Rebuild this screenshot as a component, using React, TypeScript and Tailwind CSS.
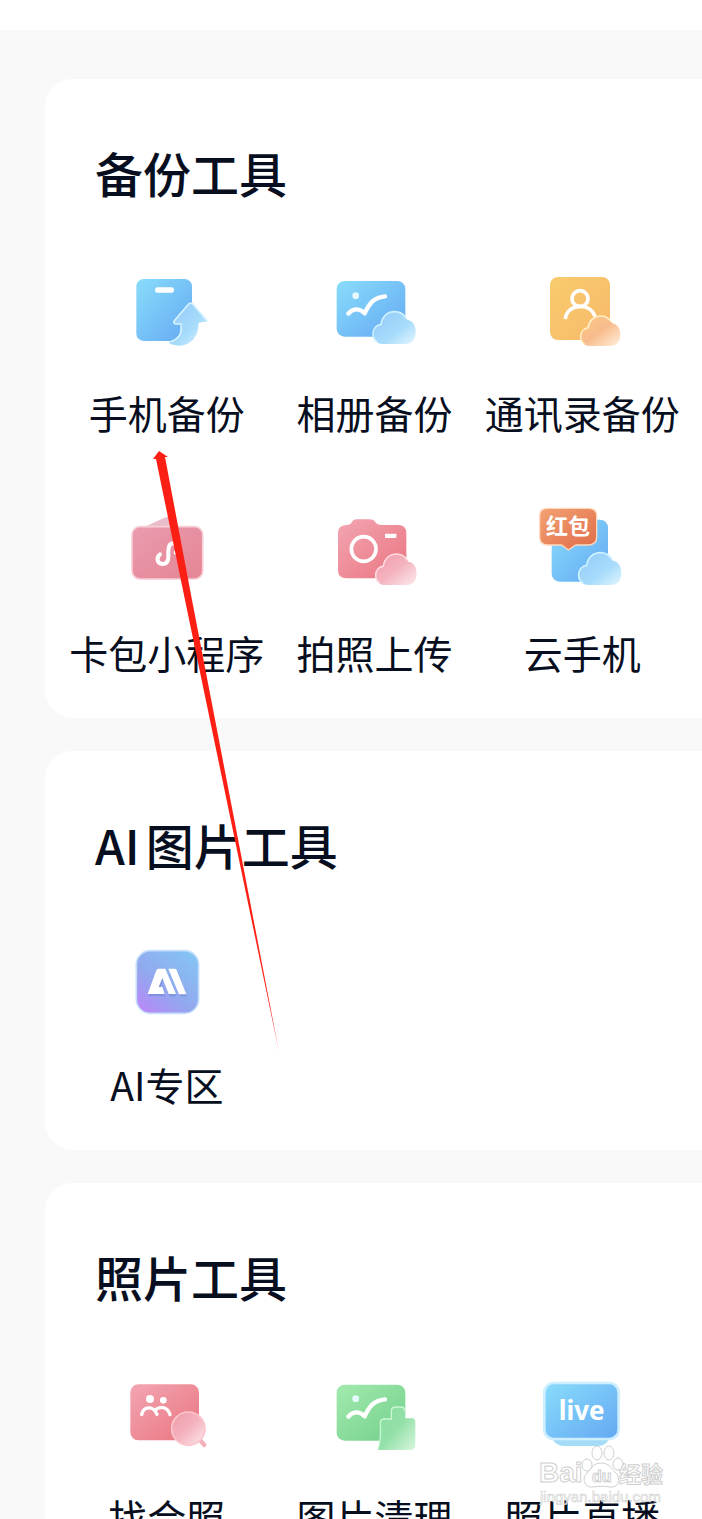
import React from 'react';

type Tool = {
  label: string;
  viewBox: string;
  icon: React.ReactNode;
};

type SectionProps = {
  title: React.ReactNode;
  tools: Tool[];
};

const Gradients: React.FC = () => (
  <svg className="absolute w-0 h-0" aria-hidden="true">
    <defs>
      <linearGradient id="blue" x1="0" y1="0" x2="1" y2="1">
        <stop offset="0" stopColor="#89dcfb" />
        <stop offset="1" stopColor="#64a8f3" />
      </linearGradient>
      <linearGradient id="blueSoft" x1="0" y1="0" x2="1" y2="1">
        <stop offset="0" stopColor="#92c8f9" />
        <stop offset="0.6" stopColor="#a8dcfb" />
        <stop offset="1" stopColor="#e2f6ff" />
      </linearGradient>
      <linearGradient id="orange" x1="0" y1="0" x2="1" y2="1">
        <stop offset="0" stopColor="#f8cb6e" />
        <stop offset="1" stopColor="#f8b96a" />
      </linearGradient>
      <linearGradient id="orangeSoft" x1="0" y1="0" x2="1" y2="1">
        <stop offset="0" stopColor="#fbcb85" />
        <stop offset="0.5" stopColor="#f8bb8c" />
        <stop offset="1" stopColor="#fff0dc" />
      </linearGradient>
      <linearGradient id="pink" x1="0" y1="0" x2="1" y2="1">
        <stop offset="0" stopColor="#f3a5b3" />
        <stop offset="1" stopColor="#e9757f" />
      </linearGradient>
      <linearGradient id="rose" x1="0" y1="0" x2="1" y2="1">
        <stop offset="0" stopColor="#e99caf" />
        <stop offset="1" stopColor="#e58493" />
      </linearGradient>
      <linearGradient id="pinkSoft" x1="0" y1="0" x2="1" y2="1">
        <stop offset="0" stopColor="#f09aa8" />
        <stop offset="0.5" stopColor="#f4b3be" />
        <stop offset="1" stopColor="#fdeaee" />
      </linearGradient>
      <linearGradient id="red" x1="0" y1="0" x2="1" y2="1">
        <stop offset="0" stopColor="#f3a273" />
        <stop offset="1" stopColor="#e06b48" />
      </linearGradient>
      <linearGradient id="green" x1="0" y1="0" x2="1" y2="1">
        <stop offset="0" stopColor="#a2eaae" />
        <stop offset="1" stopColor="#72cf8b" />
      </linearGradient>
      <linearGradient id="greenSoft" x1="0" y1="0" x2="1" y2="1">
        <stop offset="0" stopColor="#8cdea0" />
        <stop offset="0.5" stopColor="#93e0a8" />
        <stop offset="1" stopColor="#d8f7df" />
      </linearGradient>
      <linearGradient id="violet" x1="0" y1="1" x2="0.8" y2="0">
        <stop offset="0" stopColor="#bd83fa" />
        <stop offset="0.45" stopColor="#93a7ee" />
        <stop offset="1" stopColor="#85c3f3" />
      </linearGradient>
    </defs>
  </svg>
);

const Cloud: React.FC<{ x: number; y: number; fill: string; stroke: string }> = ({ x, y, fill, stroke }) => (
  <g transform={`translate(${x} ${y})`}>
    <path
      d="M32 100 C12 100 2 86 2 70 C2 53 13 43 26 41 C29 18 46 3 67 3 C86 3 98 13 104 27 C122 30 130 44 130 64 C130 88 118 100 98 100 Z"
      fill={fill}
    />
    <path
      d="M14 93 C6 88 2 80 2 70 C2 53 13 43 26 41 C29 18 46 3 67 3 C82 3 93 10 100 21"
      fill="none"
      stroke={stroke}
      strokeWidth="5"
      strokeLinecap="round"
    />
  </g>
);

const PhotoMark: React.FC = () => (
  <>
    <circle cx="122" cy="107" r="10" fill="#e6f9ff" />
    <path d="M100 161 C112 146 132 142 149 160 C163 130 177 112 210 109" fill="none" stroke="#fff" strokeWidth="13" strokeLinecap="round" strokeLinejoin="round" />
  </>
);

const backupTools: Tool[] = [
  {
    label: '手机备份',
    viewBox: '-12 0 360 300',
    icon: (
      <>
        <rect x="76" y="57" width="167" height="186" rx="22" fill="url(#blue)" />
        <rect x="132" y="82" width="57" height="16" rx="8" fill="#fff" />
        <path d="M172 247 C206 240 213 222 210 192 L194 192 Q184 189 191 181 L231 134 Q239 125 247 134 L290 184 L263 188 C263 230 240 258 200 257 Q180 255 172 247 Z" fill="url(#blueSoft)" />
        <path d="M176 246 C206 236 213 222 210 192 L194 192 Q184 189 191 181 L231 134 Q239 125 247 134 L288 182" fill="none" stroke="#d4f2ff" strokeWidth="5" strokeLinejoin="round" />
      </>
    ),
  },
  {
    label: '相册备份',
    viewBox: '-3 0 360 300',
    icon: (
      <>
        <rect x="65" y="63" width="206" height="167" rx="24" fill="url(#blue)" />
        <PhotoMark />
        <Cloud x={172} y={152} fill="url(#blueSoft)" stroke="#cdf2ff" />
      </>
    ),
  },
  {
    label: '通讯录备份',
    viewBox: '-21 0 360 300',
    icon: (
      <>
        <rect x="63" y="51" width="180" height="189" rx="24" fill="url(#orange)" />
        <circle cx="153" cy="116" r="24" fill="none" stroke="#fff" strokeWidth="11" />
        <path d="M109 177 C114 130 184 125 198 170" fill="none" stroke="#fff" strokeWidth="11" />
        <g transform="translate(153 165) scale(0.93 0.93)">
          <Cloud x={0} y={0} fill="url(#orangeSoft)" stroke="#fff0c5" />
        </g>
      </>
    ),
  },
  {
    label: '卡包小程序',
    viewBox: '-12 180 360 300',
    icon: (
      <>
        <path d="M105 259 L160 233 Q172 228 180 236 L204 261 Z" fill="#e8bccb" />
        <rect x="63" y="260" width="212" height="157" rx="24" fill="url(#rose)" stroke="#f8cdd7" strokeWidth="5" />
        <path d="M147 343 C135 352 138 371 154 372 C168 372 172 362 172 350 V332 C172 318 178 310 189 310 C206 311 208 332 194 338" fill="none" stroke="#fff" strokeWidth="12" strokeLinecap="round" />
      </>
    ),
  },
  {
    label: '拍照上传',
    viewBox: '-3 0 360 300',
    icon: (
      <>
        <path d="M93 75 Q106 76 110 67 Q115 58 126 58 H164 Q176 58 181 67 Q186 75 197 75 H249 Q274 75 274 100 V211 Q274 235 249 235 H94 Q69 235 69 211 V100 Q69 76 93 75 Z" fill="url(#pink)" />
        <circle cx="146" cy="147" r="37" fill="none" stroke="#fff" strokeWidth="11" />
        <rect x="210" y="101" width="34" height="13" rx="2" fill="#fff" />
        <g transform="translate(180 159) scale(0.96 0.96)">
          <Cloud x={0} y={0} fill="url(#pinkSoft)" stroke="#ffdbe2" />
        </g>
      </>
    ),
  },
  {
    label: '云手机',
    viewBox: '9 15 360 300',
    icon: (
      <>
        <rect x="98" y="74" width="169" height="186" rx="24" fill="url(#blue)" />
        <path d="M85 40 H208 Q233 40 233 62 V126 Q233 150 208 150 H170 L148 165 L128 150 H85 Q62 150 62 126 V62 Q62 40 85 40 Z" fill="url(#red)" stroke="#ffd9be" strokeWidth="4" strokeLinejoin="round" />
        <text x="147" y="117" textAnchor="middle" className="text-[66px] font-bold" fill="#fff">红包</text>
        <Cloud x={177} y={170} fill="url(#blueSoft)" stroke="#cdf2ff" />
      </>
    ),
  },
];

const aiTools: Tool[] = [
  {
    label: 'AI专区',
    viewBox: '-12 -9 360 300',
    icon: (
      <>
        <rect x="76" y="47" width="187" height="188" rx="42" fill="url(#violet)" stroke="#c6defa" strokeWidth="5" />
        <g transform="translate(2 6)" fill="#6b82d2" opacity="0.5">
          <path d="M110 178 L139 103 H164 L194 178 H173 L155 129 L143 158 H154 L162 178 Z" />
          <path d="M178 103 H198 L225 178 H205 Z" />
        </g>
        <path d="M110 177 L136 106 Q138 101 143 101 H163 L195 177 H173 L154 129 L143 156 H154 L161 177 Z" fill="#fff" />
        <path d="M172 101 H190 Q195 101 197 105 L226 178 H204 Z" fill="#fff" />
      </>
    ),
  },
];

const photoTools: Tool[] = [
  {
    label: '找合照',
    viewBox: '-12 -18 360 300',
    icon: (
      <>
        <rect x="58" y="43" width="206" height="168" rx="24" fill="url(#pink)" />
        <circle cx="117" cy="87" r="12" fill="#fff" />
        <circle cx="157" cy="91" r="10" fill="#fff" />
        <path d="M92 134 C97 108 127 106 138 133 M134 119 C150 106 171 112 177 134" fill="none" stroke="#fff" strokeWidth="10" strokeLinecap="round" />
        <path d="M264 207 L280 225" stroke="#f4b1bb" strokeWidth="13" strokeLinecap="round" />
        <circle cx="232" cy="176" r="50" fill="url(#pinkSoft)" stroke="#fbc6cd" strokeWidth="5" />
      </>
    ),
  },
  {
    label: '图片清理',
    viewBox: '-3 -18 360 300',
    icon: (
      <>
        <rect x="65" y="44" width="206" height="168" rx="24" fill="url(#green)" />
        <g transform="translate(0 -21)">
          <PhotoMark />
        </g>
        <path d="M229 145 V124 Q229 111 242 111 H257 Q270 111 270 124 V145 H292 Q301 146 301 156 V222 Q301 240 285 240 H189 Q198 212 196 160 Q196 146 208 146 Z" fill="url(#greenSoft)" />
        <path d="M190 236 Q198 212 196 160 Q196 147 208 147 H229 V124 Q229 111 242 111 H257 Q270 111 270 124" fill="none" stroke="#c8f6d1" strokeWidth="4" />
      </>
    ),
  },
  {
    label: '照片直播',
    viewBox: '99 -18 360 300',
    icon: (
      <>
        <path d="M188 204 H362 Q350 228 328 228 H224 Q202 228 188 204 Z" fill="#a4dcf7" />
        <rect x="166" y="39" width="223" height="168" rx="28" fill="url(#blue)" stroke="#cdefff" strokeWidth="8" />
        <text x="278" y="149" textAnchor="middle" className="font-['Noto_Sans'] text-[78px] font-bold" fill="#fff">live</text>
      </>
    ),
  },
];

const ToolSection: React.FC<SectionProps> = ({ title, tools }) => (
  <section className="bg-white rounded-l-[28px] pl-[18px] pr-4 pt-[57px] pb-[38px]">
    <h2 className="pl-8 text-[48px] leading-[72px] font-medium">{title}</h2>
    <div className="mt-[52px] grid grid-cols-3 gap-y-[60px]">
      {tools.map(tool => (
        <button key={tool.label} type="button" className="flex flex-col items-center gap-6">
          <svg className="w-[120px] h-[100px]" viewBox={tool.viewBox} aria-hidden="true">
            {tool.icon}
          </svg>
          <span className="text-[39px] leading-[56px] whitespace-nowrap">{tool.label}</span>
        </button>
      ))}
    </div>
  </section>
);

const Arrow: React.FC = () => (
  <svg className="absolute left-[150px] top-[450px] w-[130px] h-[604px] pointer-events-none" viewBox="0 0 130 604" aria-hidden="true">
    <path d="M9 1 L18 7 L15 7 L42 150 L129 602 L35 150 L6 9 L3 9 Z" fill="#fc2014" />
  </svg>
);

const Watermark: React.FC = () => (
  <svg className="absolute right-[34px] bottom-[14px] w-[132px] h-[64px] pointer-events-none" viewBox="0 0 132 64" aria-hidden="true">
    <g fill="#fff" fillOpacity="0.8" stroke="#cfcfcf" strokeWidth="1">
      <text x="3" y="41" className="font-['Liberation_Sans'] text-[28px] font-bold">Bai</text>
      <ellipse cx="51" cy="24" rx="5" ry="6" />
      <ellipse cx="61" cy="12" rx="5" ry="7" />
      <ellipse cx="73" cy="12" rx="5" ry="7" />
      <ellipse cx="82" cy="23" rx="5" ry="6" />
      <path d="M65 22 C57 22 56 28 51 32 C45 38 49 47 57 46 C64 45 68 45 74 46 C83 47 85 38 80 32 C75 27 73 22 65 22 Z" />
      <text x="56" y="41" className="font-['Liberation_Sans'] text-[16px] font-bold">du</text>
      <text x="83" y="41" className="text-[22px] font-bold">经验</text>
      <text x="4" y="61" strokeWidth="0.6" className="font-['Liberation_Sans'] text-[15px]">jingyan.baidu.com</text>
    </g>
  </svg>
);

const App: React.FC = () => {
  return (
    <div className="relative h-screen overflow-hidden bg-[#f9f9f9] text-[#070e20] font-['Noto_Sans_CJK_SC',sans-serif]">
      <Gradients />
      <div className="h-[30px] bg-white" />
      <main className="pt-[49px] pl-[45px] flex flex-col gap-[33px]">
        <ToolSection title="备份工具" tools={backupTools} />
        <ToolSection title={<><span className="mr-1.5">AI</span>图片工具</>} tools={aiTools} />
        <ToolSection title="照片工具" tools={photoTools} />
      </main>
      <Arrow />
      <Watermark />
    </div>
  );
};

export default App;
